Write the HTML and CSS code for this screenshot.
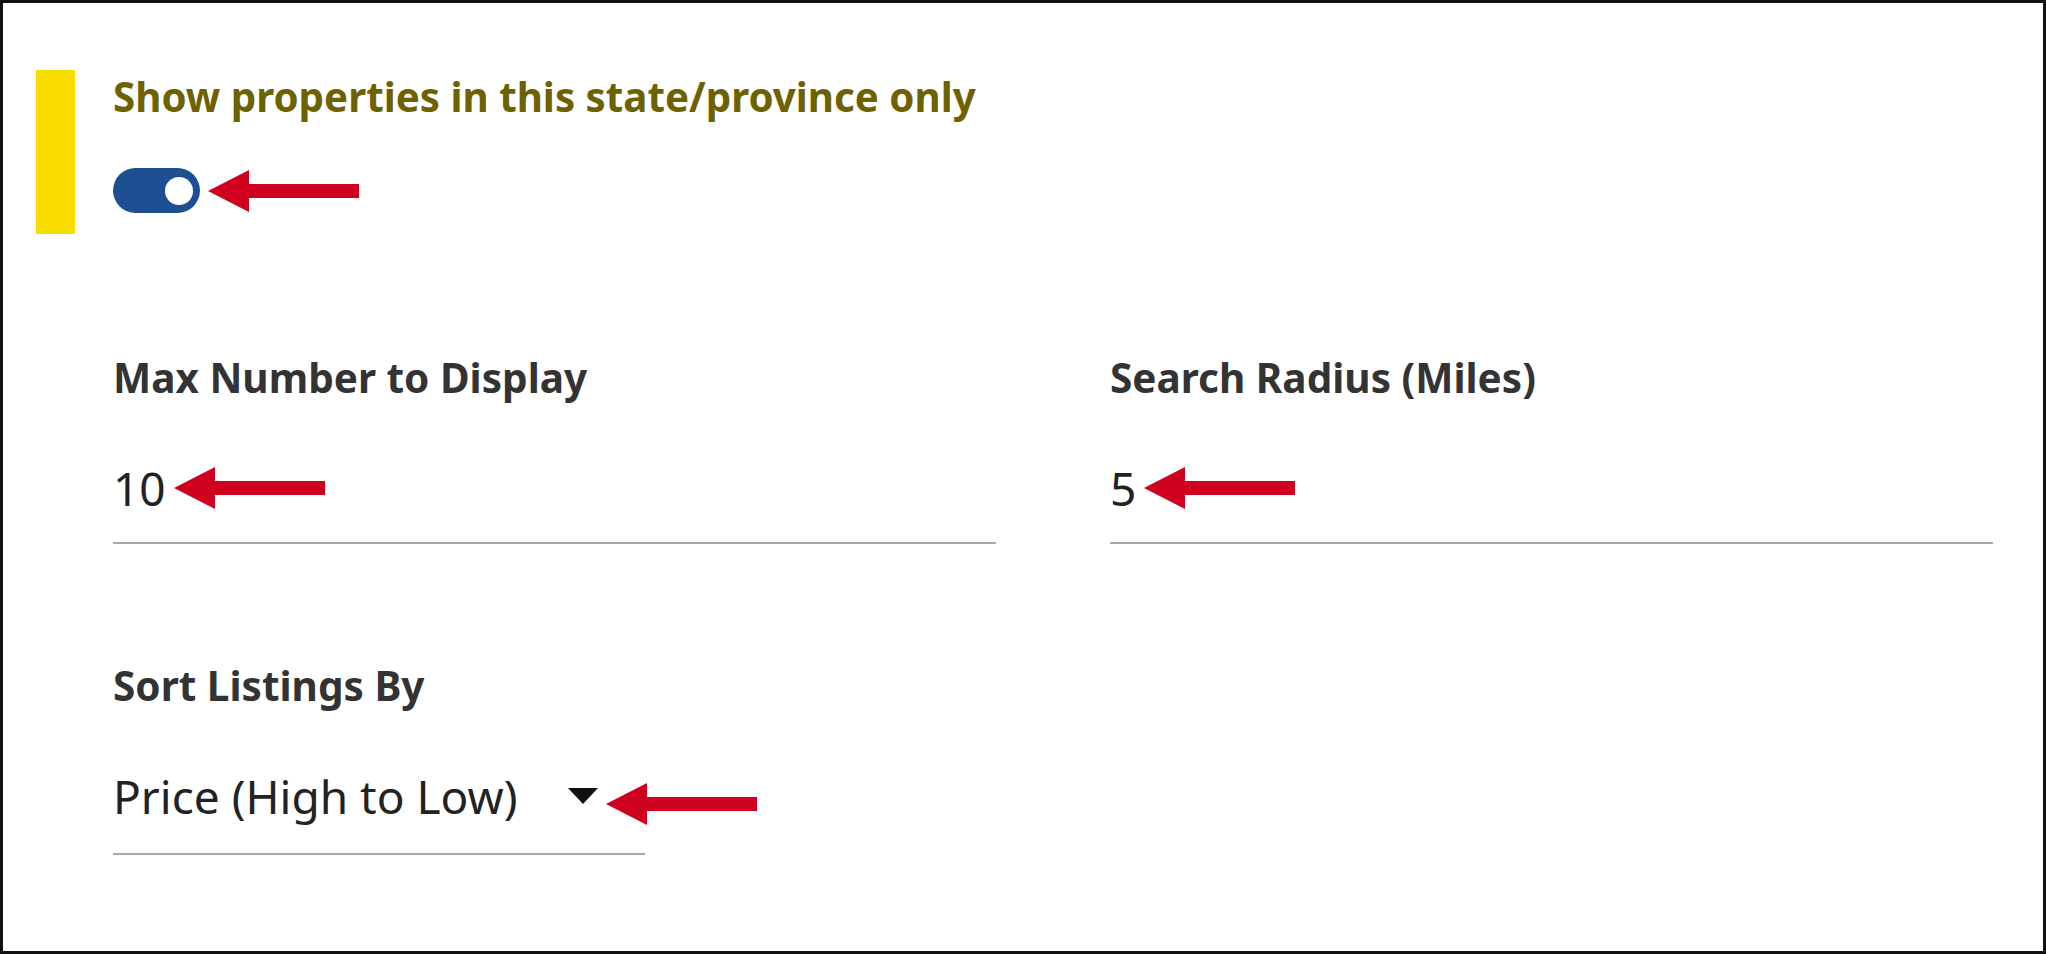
FILE: index.html
```html
<!DOCTYPE html>
<html lang="en">
<head>
    <meta charset="UTF-8">
    <meta name="viewport" content="width=device-width, initial-scale=1.0">
    <title>Listing Settings</title>
    <link rel="stylesheet" href="styles.css">
</head>
<body>
    <div class="panel">
        <div class="highlight">
            <h2 class="toggle-title">Show properties in this state/province only</h2>
            <div class="toggle-row">
                <span class="switch"><span class="knob"></span></span>
                <svg class="pointer" width="151" height="42" viewBox="0 0 151 42"><polygon points="0,21 41,0 41,14 151,14 151,28 41,28 41,42"/></svg>
            </div>
        </div>

        <div class="fields">
            <div class="field">
                <label>Max Number to Display</label>
                <div class="input-line">
                    <span class="value">10</span>
                    <svg class="pointer" width="151" height="42" viewBox="0 0 151 42"><polygon points="0,21 41,0 41,14 151,14 151,28 41,28 41,42"/></svg>
                </div>
            </div>
            <div class="field">
                <label>Search Radius (Miles)</label>
                <div class="input-line">
                    <span class="value">5</span>
                    <svg class="pointer" width="151" height="42" viewBox="0 0 151 42"><polygon points="0,21 41,0 41,14 151,14 151,28 41,28 41,42"/></svg>
                </div>
            </div>
            <div class="field">
                <label>Sort Listings By</label>
                <div class="select-line">
                    <span class="value">Price (High to Low)</span>
                    <span class="caret"></span>
                    <svg class="pointer pointer-over" width="151" height="42" viewBox="0 0 151 42"><polygon points="0,21 41,0 41,14 151,14 151,28 41,28 41,42"/></svg>
                </div>
            </div>
        </div>
    </div>
</body>
</html>
```

FILE: styles.css
```css
body {
    margin: 0;
    font-family: "Noto Sans", "Open Sans", sans-serif;
    background-color: white;
}
.panel {
    box-sizing: border-box;
    height: 954px;
    border: 3px solid #111;
    padding: 67px 50px 0 33px;
}
.highlight {
    border-left: 39px solid #f8dc00;
    padding: 3px 0 21px 38px;
}
.toggle-title {
    margin: 0;
    font-size: 40.3px;
    line-height: 48px;
    font-weight: 700;
    color: #6e6200;
}
.toggle-row {
    display: flex;
    align-items: center;
    margin-top: 47px;
}
.switch {
    display: flex;
    align-items: center;
    width: 87px;
    height: 45px;
    border-radius: 23px;
    background-color: #1f4f93;
}
.knob {
    width: 28px;
    height: 28px;
    margin-left: auto;
    margin-right: 7px;
    border-radius: 50%;
    background-color: white;
}
.pointer {
    display: block;
    flex: none;
    margin-left: 8px;
    fill: #d0001f;
}
.fields {
    display: grid;
    grid-template-columns: 883px 883px;
    column-gap: 114px;
    row-gap: 118px;
    margin: 120px 0 0 77px;
}
.field label {
    display: block;
    font-size: 40.5px;
    line-height: 48px;
    font-weight: 700;
    color: #333;
}
.input-line, .select-line {
    display: flex;
    align-items: center;
    margin-top: 58px;
    border-bottom: 2px solid #a8a8a8;
}
.input-line {
    padding-bottom: 26px;
}
.select-line {
    position: relative;
    width: 532px;
    padding: 0 47px 29px 0;
    box-sizing: border-box;
}
.value {
    font-size: 46px;
    line-height: 56px;
    color: #222;
}
.caret {
    margin-left: auto;
    width: 0;
    height: 0;
    border-left: 15px solid transparent;
    border-right: 15px solid transparent;
    border-top: 16px solid #111;
}
.pointer-over {
    position: absolute;
    left: 493px;
    top: 15px;
    margin-left: 0;
}
```
